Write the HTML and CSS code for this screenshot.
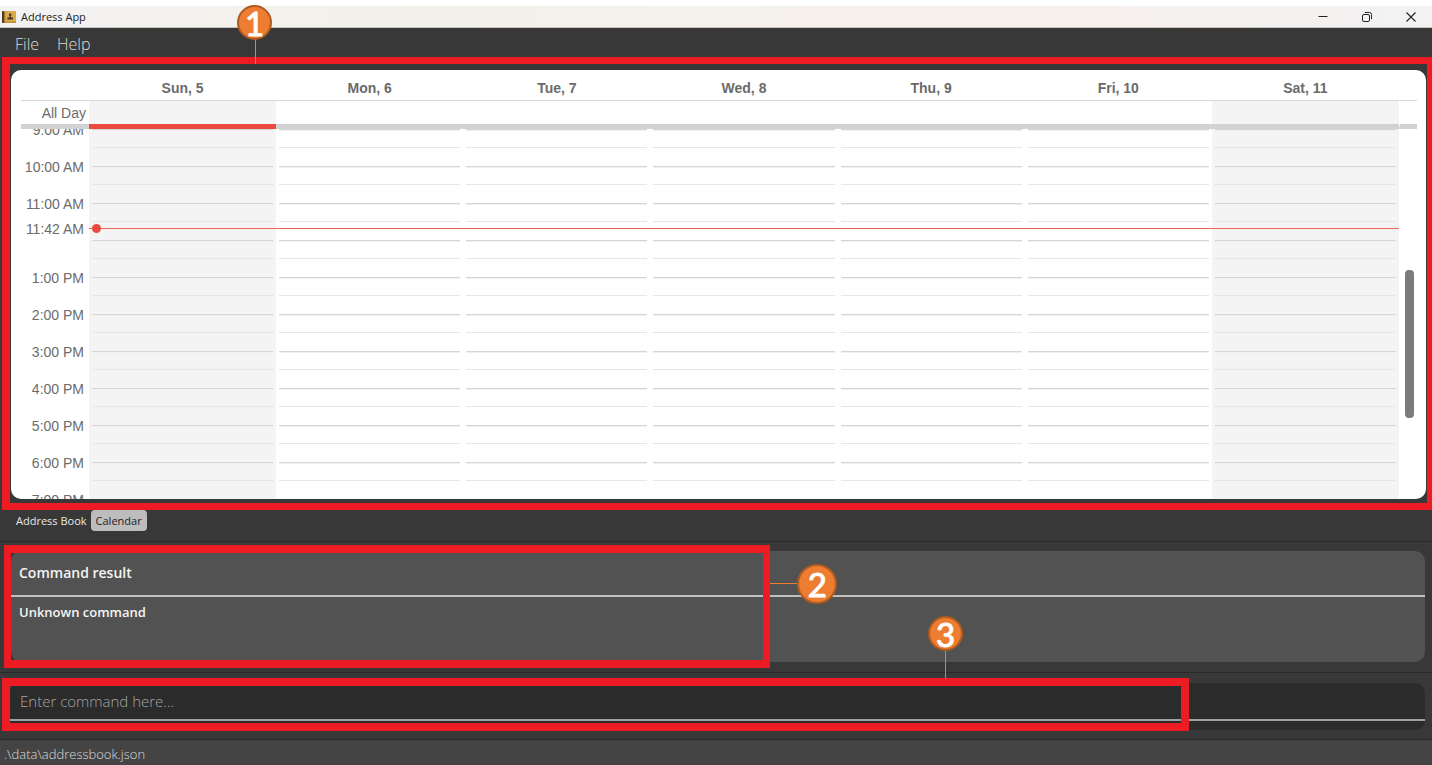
FILE: index.html
```html
<!DOCTYPE html>
<html lang="en">
<head>
<meta charset="utf-8">
<title>Address App</title>
<link rel="stylesheet" href="styles.css">
</head>
<body>
<div class="app">
  <header class="titlebar">
    <svg class="app-icon" width="14" height="14" viewBox="0 0 14 14" aria-hidden="true">
      <rect x="0" y="1" width="14" height="12" rx="1" fill="#d9a94e"/>
      <rect x="0" y="1" width="2.200" height="12" rx="1" fill="#4a3b2c"/>
      <rect x="2.200" y="1" width="1" height="12" fill="#a8792d"/>
      <rect x="3" y="11.500" width="11" height="1.500" fill="#c08f3b"/>
      <circle cx="8.200" cy="4.800" r="1.300" fill="#4a3318"/>
      <path d="M7.600 5.500h1.200v2h2.200v2H5.400V7.500h2.200z" fill="#4a3318"/>
    </svg>
    <span class="app-name">Address App</span>
    <div class="window-controls">
      <button type="button" aria-label="Minimize"><svg width="12" height="12" viewBox="0 0 12 12"><path d="M1.500 5.500h9" stroke="#222" fill="none"/></svg></button>
      <button type="button" aria-label="Restore"><svg width="12" height="12" viewBox="0 0 12 12"><g stroke="#222" fill="none"><rect x="1.500" y="3.500" width="7" height="7" rx="1.500"/><path d="M3.800 1.500H8.500a2 2 0 0 1 2 2V8.200"/></g></svg></button>
      <button type="button" aria-label="Close"><svg width="12" height="12" viewBox="0 0 12 12"><path d="M1.500 1.500l9 9M10.500 1.500l-9 9" stroke="#222" fill="none" stroke-width="1.100"/></svg></button>
    </div>
  </header>

  <nav class="menubar">
    <button type="button">File</button>
    <button type="button">Help</button>
  </nav>

  <section class="calendar-pane">
    <div class="calendar">
      <div class="week-row week-head">
        <span></span>
        <span>Sun, 5</span><span>Mon, 6</span><span>Tue, 7</span><span>Wed, 8</span><span>Thu, 9</span><span>Fri, 10</span><span>Sat, 11</span>
        <span class="gutter"></span>
      </div>
      <div class="week-row all-day">
        <span class="all-day-label">All Day</span>
        <span class="weekend today"></span><span></span><span></span><span></span><span></span><span></span><span class="weekend"></span>
        <span class="gutter"></span>
      </div>
      <div class="week-row week-body">
        <div class="hours">
          <span>9:00 AM</span><span>10:00 AM</span><span>11:00 AM</span><span></span><span>1:00 PM</span><span>2:00 PM</span><span>3:00 PM</span><span>4:00 PM</span><span>5:00 PM</span><span>6:00 PM</span><span>7:00 PM</span>
        </div>
        <div class="day weekend"></div>
        <div class="day"></div>
        <div class="day"></div>
        <div class="day"></div>
        <div class="day"></div>
        <div class="day"></div>
        <div class="day weekend"></div>
        <div class="scroll-track"><div class="scroll-thumb"></div></div>
        <div class="now"><span class="now-label">11:42 AM</span><span class="now-line"></span></div>
      </div>
    </div>
    <div class="callout callout-calendar">
      <span class="lead lead-down"></span><span class="badge">1</span>
    </div>
  </section>

  <div class="tabs" role="tablist">
    <button type="button" role="tab" aria-selected="false">Address Book</button>
    <button type="button" role="tab" aria-selected="true" class="selected">Calendar</button>
  </div>

  <section class="result-pane">
    <div class="result">
      <h2>Command result</h2>
      <p>Unknown command</p>
    </div>
    <div class="callout callout-result">
      <span class="lead lead-across"></span><span class="badge badge-large">2</span>
    </div>
  </section>

  <section class="command-pane">
    <div class="command">
      <input type="text" placeholder="Enter command here..." aria-label="Command">
    </div>
    <div class="callout callout-command">
      <span class="lead lead-down"></span><span class="badge">3</span>
    </div>
  </section>

  <footer class="statusbar">.\data\addressbook.json</footer>
</div>
</body>
</html>
```
FILE: styles.css
```css
* { box-sizing: border-box; }

body {
  margin: 0;
  background: #383838;
  font-family: "Open Sans", "Noto Sans", sans-serif;
}

button {
  margin: 0;
  padding: 0;
  border: 0;
  background: none;
  font: inherit;
  color: inherit;
}

.app {
  display: flex;
  flex-direction: column;
  height: 100vh;
  min-height: 480px;
  overflow: hidden;
}

/* Window frame */
.titlebar {
  display: flex;
  align-items: center;
  height: 28px;
  padding-left: 2px;
  border-top: 6px solid #fff;
  border-bottom: 1px solid #c4c2bf;
  background: linear-gradient(90deg, #f3f3f3, #f3f1eb 20%, #f6f0ec 75%, #f3f3f3);
}

.app-name {
  margin-left: 5px;
  font-size: 11px;
  color: #222;
}

.window-controls {
  display: flex;
  gap: 2px;
  margin-left: auto;
}

.window-controls button {
  display: grid;
  place-items: center;
  width: 42px;
  height: 20px;
}

.menubar {
  display: flex;
  gap: 18px;
  height: 29px;
  padding: 3px 15px 0;
  font-size: 16px;
  font-weight: 300;
  line-height: 24px;
  color: #dcdcdc;
}

/* Calendar */
.calendar-pane {
  position: relative;
  display: flex;
  flex: 1;
  min-height: 0;
  padding: 13px 6px 11px 11px;
}

.calendar {
  display: flex;
  flex: 1;
  flex-direction: column;
  min-width: 0;
  padding: 0 9px 0 10px;
  border-radius: 10px;
  overflow: hidden;
  background: #fff;
  font-family: "Liberation Sans", Arial, sans-serif;
  font-size: 14px;
  color: #6b6b6b;
}

.week-row {
  display: grid;
  grid-template-columns: 68px repeat(7, 1fr) 18px;
}

.week-head {
  height: 31px;
  font-weight: bold;
  line-height: 24px;
  text-align: center;
}

.week-head > span {
  padding-top: 6px;
  border-bottom: 1px solid #d8d8d8;
}

.week-row > .gutter { border-left: 1px solid #fff; }

.all-day {
  height: 28px;
  line-height: 23px;
}

.all-day > span { border-bottom: 5px solid #d2d2d2; }
.all-day > .today { border-bottom-color: #ea4b3e; }

.all-day-label {
  padding-top: 1px;
  padding-right: 3px;
  line-height: 22px;
  text-align: right;
}

.weekend { background-color: #f4f4f4; }

.week-body {
  position: relative;
  flex: 1;
  min-height: 0;
  overflow: hidden;
}

.hours {
  display: flex;
  flex-direction: column;
  height: 0;
  margin-top: -17px;
  padding-right: 5px;
  line-height: 37px;
  text-align: right;
}

.hours span { flex: 0 0 37px; }

.day {
  padding: 0 3px;
  background-image: linear-gradient(#d6d6d6 1px, #f0f0f0 1px 2px, transparent 2px 18px, #e6e6e6 18px 19px, transparent 19px);
  background-size: 100% 37px;
  background-origin: content-box;
  background-repeat: no-repeat repeat;
}

.scroll-track { padding: 141px 3px 0 6px; }

.scroll-thumb {
  height: 148px;
  border-radius: 4px;
  background: #7b7b7b;
}

.now {
  position: absolute;
  top: 90px;
  left: 0;
  right: 18px;
  display: flex;
  align-items: flex-start;
  height: 20px;
  line-height: 20px;
}

.now-label {
  flex: 0 0 68px;
  padding-right: 5px;
  text-align: right;
}

.now-line {
  position: relative;
  flex: 1;
  height: 1px;
  margin-top: 9px;
  background: #ee6558;
}

.now-line::before {
  content: "";
  position: absolute;
  top: -4px;
  left: 3px;
  width: 9px;
  height: 9px;
  border-radius: 50%;
  background: #ea4b3e;
}

/* Tabs */
.tabs {
  display: flex;
  height: 32px;
  padding: 0 12px 10px;
  border-bottom: 1px solid #292929;
  font-size: 11px;
  line-height: 20px;
  color: #e8e8e8;
}

.tabs button {
  padding: 0 4px;
  border-radius: 4px;
}

.tabs .selected {
  padding: 0 5px;
  background: #bdbdbd;
  color: #222;
}

/* Command result */
.result-pane {
  position: relative;
  height: 131px;
  padding: 9px 7px 11px 11px;
  border-bottom: 1px solid #292929;
}

.result {
  height: 111px;
  border-radius: 10px;
  background: #525252;
  color: #f4f4f4;
}

.result h2,
.result p {
  margin: 0;
  padding-left: 8px;
  font-weight: 600;
}

.result h2 {
  height: 46px;
  border-bottom: 2px solid #c0c0c0;
  font-size: 14px;
  line-height: 44px;
}

.result p {
  font-size: 13px;
  line-height: 31px;
}

/* Command entry */
.command-pane {
  position: relative;
  height: 67px;
  padding: 10px 7px 10px 10px;
  border-bottom: 1px solid #292929;
}

.command {
  height: 47px;
  border-radius: 10px;
  background: #2b2b2b;
}

.command input {
  display: block;
  width: 100%;
  height: 38px;
  padding: 0 10px;
  border: 0;
  border-bottom: 2px solid #a0a0a0;
  outline: 0;
  background: none;
  font: 300 15px "Open Sans", sans-serif;
  color: #fff;
}

.command input::placeholder {
  color: #a6a6a6;
  opacity: 1;
}

.statusbar {
  height: 25px;
  padding-left: 4px;
  background: #444;
  font-size: 13px;
  font-weight: 300;
  line-height: 28px;
  color: #dcdcdc;
}

/* Numbered callouts drawn over the panes */
.callout {
  position: absolute;
  border: 8px solid #ed1c24;
  pointer-events: none;
}

.callout-calendar {
  inset: 0 0 0 2px;
  border-width: 7px 5px 7px 8px;
}

.callout-result {
  top: 3px;
  bottom: 4px;
  left: 4px;
  width: calc(54% - 7px);
  border-width: 8px 7px;
}

.callout-command {
  top: 5px;
  bottom: 8px;
  left: 2px;
  width: calc(83% - 2px);
}

.badge {
  position: absolute;
  display: grid;
  place-items: center;
  width: 35px;
  height: 35px;
  border: 2px solid #ae5a21;
  border-radius: 50%;
  background: #ed7d31;
  font-family: Lato, sans-serif;
  font-size: 33px;
  line-height: 33px;
  color: #fff;
  -webkit-text-stroke: 1px #fff;
}

.badge-large {
  width: 40px;
  height: 40px;
}

.lead {
  position: absolute;
  background: #ed7d31;
}

.lead-down {
  width: 1px;
  height: 28px;
}

.lead-across {
  width: 28px;
  height: 1px;
}

.callout-calendar .badge { top: -59px; left: 227px; }
.callout-calendar .lead { top: -28px; left: 245px; }
.callout-result .badge { top: 11px; left: calc(100% + 34px); }
.callout-result .lead { top: 30px; left: calc(100% + 7px); }
.callout-command .badge { top: -70px; left: 918px; }
.callout-command .lead { top: -35px; left: 935px; }
```
